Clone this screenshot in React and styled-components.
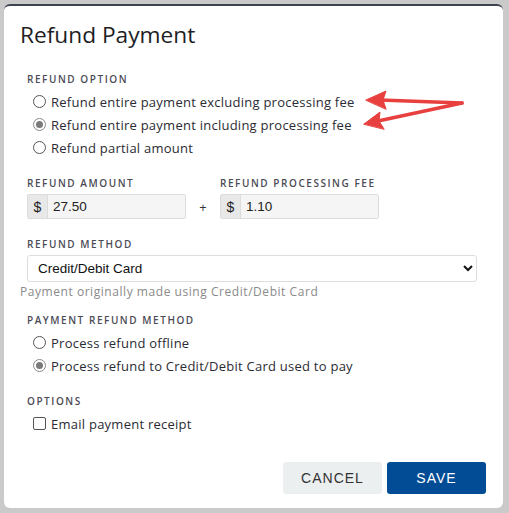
import React from "react";
import styled, { createGlobalStyle } from "styled-components";

const Global = createGlobalStyle`
  html, body { margin: 0; padding: 0; }
  body { background: #cacaca; font-family: "Open Sans", "Liberation Sans", sans-serif; }
`;

const Page = styled.div`
  position: relative;
  width: 509px;
  height: 513px;
  padding: 4px 6px 5px 4px;
  box-sizing: border-box;
  overflow: hidden;
`;

const Modal = styled.div`
  position: relative;
  background: #fff;
  height: 504px;
  border-radius: 6px;
  border-top: 2px solid #3d4350;
  box-sizing: border-box;
  padding: 14px 16px 0 16px;
  display: flex;
  flex-direction: column;
`;

const Title = styled.h1`
  margin: 0;
  font-family: "Open Sans", sans-serif;
  font-weight: 400;
  font-size: 22.7px;
  line-height: 30px;
  color: #1e1e24;
`;

const Body = styled.div`
  padding: 0 0 0 7px;
  display: flex;
  flex-direction: column;
`;

const Label = styled.div`
  font-family: "Open Sans", sans-serif;
  font-size: 10px;
  font-weight: 600;
  letter-spacing: 1.55px;
  color: #4b4b55;
  line-height: 14px;
  margin-top: ${(p) => p.$mt || 0}px;
  margin-bottom: 4px;
  white-space: nowrap;
`;

const OptionRow = styled.label`
  display: flex;
  align-items: center;
  gap: 5px;
  height: 23px;
  padding-left: 6px;
  font-size: 13px;
  color: #2b2b33;
  letter-spacing: 0.25px;
`;

const Radio = styled.span`
  width: 11px;
  height: 11px;
  border-radius: 50%;
  border: 1px solid ${(p) => (p.$checked ? "#8a8a8a" : "#555")};
  box-sizing: content-box;
  display: inline-flex;
  align-items: center;
  justify-content: center;
  flex: none;
  &::after {
    content: "";
    width: 7px;
    height: 7px;
    border-radius: 50%;
    background: ${(p) => (p.$checked ? "#7a7a7a" : "transparent")};
  }
`;

const Check = styled.span`
  width: 11px;
  height: 11px;
  border-radius: 2px;
  border: 1px solid #555;
  box-sizing: content-box;
  flex: none;
`;

const AmountRow = styled.div`
  display: flex;
  align-items: flex-start;
  margin-top: 17px;
`;

const Field = styled.div`
  display: flex;
  flex-direction: column;
  width: 159px;
`;

const InputGroup = styled.div`
  display: flex;
  height: 25px;
  border: 1px solid #dcdcdc;
  border-radius: 2px;
  box-sizing: border-box;
  overflow: hidden;
`;

const Addon = styled.span`
  width: 19px;
  background: #e8e8e8;
  border-right: 1px solid #dcdcdc;
  display: flex;
  align-items: center;
  justify-content: center;
  font-family: "Liberation Sans", Arial, sans-serif;
  font-size: 14px;
  color: #222;
`;

const Input = styled.input`
  flex: 1;
  min-width: 0;
  border: none;
  background: #f5f5f5;
  padding: 0 0 0 5px;
  font-family: "Liberation Sans", Arial, sans-serif;
  font-size: 13.5px;
  color: #222;
  outline: none;
`;

const Plus = styled.span`
  width: 34px;
  text-align: center;
  font-size: 13px;
  color: #333;
  padding-top: 22px;
`;

const Select = styled.select`
  width: 450px;
  height: 27px;
  border: 1px solid #dedede;
  border-radius: 3px;
  background: #fff;
  font-family: "Liberation Sans", Arial, sans-serif;
  font-size: 13.5px;
  color: #111;
  padding-left: 6px;
`;

const Help = styled.div`
  margin-left: -7px;
  margin-top: 2px;
  font-size: 12px;
  letter-spacing: 0.55px;
  color: #8a8a8a;
  line-height: 16px;
  white-space: nowrap;
`;

const Footer = styled.div`
  margin-top: auto;
  display: flex;
  justify-content: flex-end;
  gap: 5px;
  padding: 0 1px 14px 0;
`;

const Button = styled.button`
  width: 99px;
  height: 32px;
  border: none;
  border-radius: 3px;
  font-family: "Liberation Sans", Arial, sans-serif;
  font-size: 14px;
  letter-spacing: 1px;
  background: ${(p) => (p.$primary ? "#024c95" : "#eceff0")};
  color: ${(p) => (p.$primary ? "#fff" : "#333")};
`;

const Arrows = styled.svg`
  position: absolute;
  left: 0;
  top: 0;
  pointer-events: none;
`;

function Option({ checked, children, box }) {
  return (
    <OptionRow>
      {box ? <Check /> : <Radio $checked={checked} />}
      <span>{children}</span>
    </OptionRow>
  );
}

export default function App() {
  return (
    <>
      <Global />
      <Page>
        <Modal>
          <Title>Refund Payment</Title>
          <Body>
            <Label $mt={22}>REFUND OPTION</Label>
            <Option>Refund entire payment excluding processing fee</Option>
            <Option checked>Refund entire payment including processing fee</Option>
            <Option>Refund partial amount</Option>

            <AmountRow>
              <Field>
                <Label>REFUND AMOUNT</Label>
                <InputGroup>
                  <Addon>$</Addon>
                  <Input readOnly value="27.50" />
                </InputGroup>
              </Field>
              <Plus>+</Plus>
              <Field>
                <Label>REFUND PROCESSING FEE</Label>
                <InputGroup>
                  <Addon>$</Addon>
                  <Input readOnly value="1.10" />
                </InputGroup>
              </Field>
            </AmountRow>

            <Label $mt={18}>REFUND METHOD</Label>
            <Select defaultValue="cc">
              <option value="cc">Credit/Debit Card</option>
            </Select>
            <Help>Payment originally made using Credit/Debit Card</Help>

            <Label $mt={13}>PAYMENT REFUND METHOD</Label>
            <Option>Process refund offline</Option>
            <Option checked>Process refund to Credit/Debit Card used to pay</Option>

            <Label $mt={17}>OPTIONS</Label>
            <Option box>Email payment receipt</Option>
          </Body>
          <Footer>
            <Button>CANCEL</Button>
            <Button $primary>SAVE</Button>
          </Footer>
        </Modal>
        <Arrows width="509" height="513" viewBox="0 0 509 513">
          <g fill="#e8403f" stroke="#e8403f" strokeLinecap="round" strokeLinejoin="round">
            <line x1="462" y1="103" x2="380" y2="100" strokeWidth="3.5" />
            <polygon points="366,100 386,91 383,100 386,109" strokeWidth="1" />
            <line x1="462" y1="103" x2="378" y2="121" strokeWidth="3.5" />
            <polygon points="364,124 380,112 379,121 384,129" strokeWidth="1" />
          </g>
        </Arrows>
      </Page>
    </>
  );
}
